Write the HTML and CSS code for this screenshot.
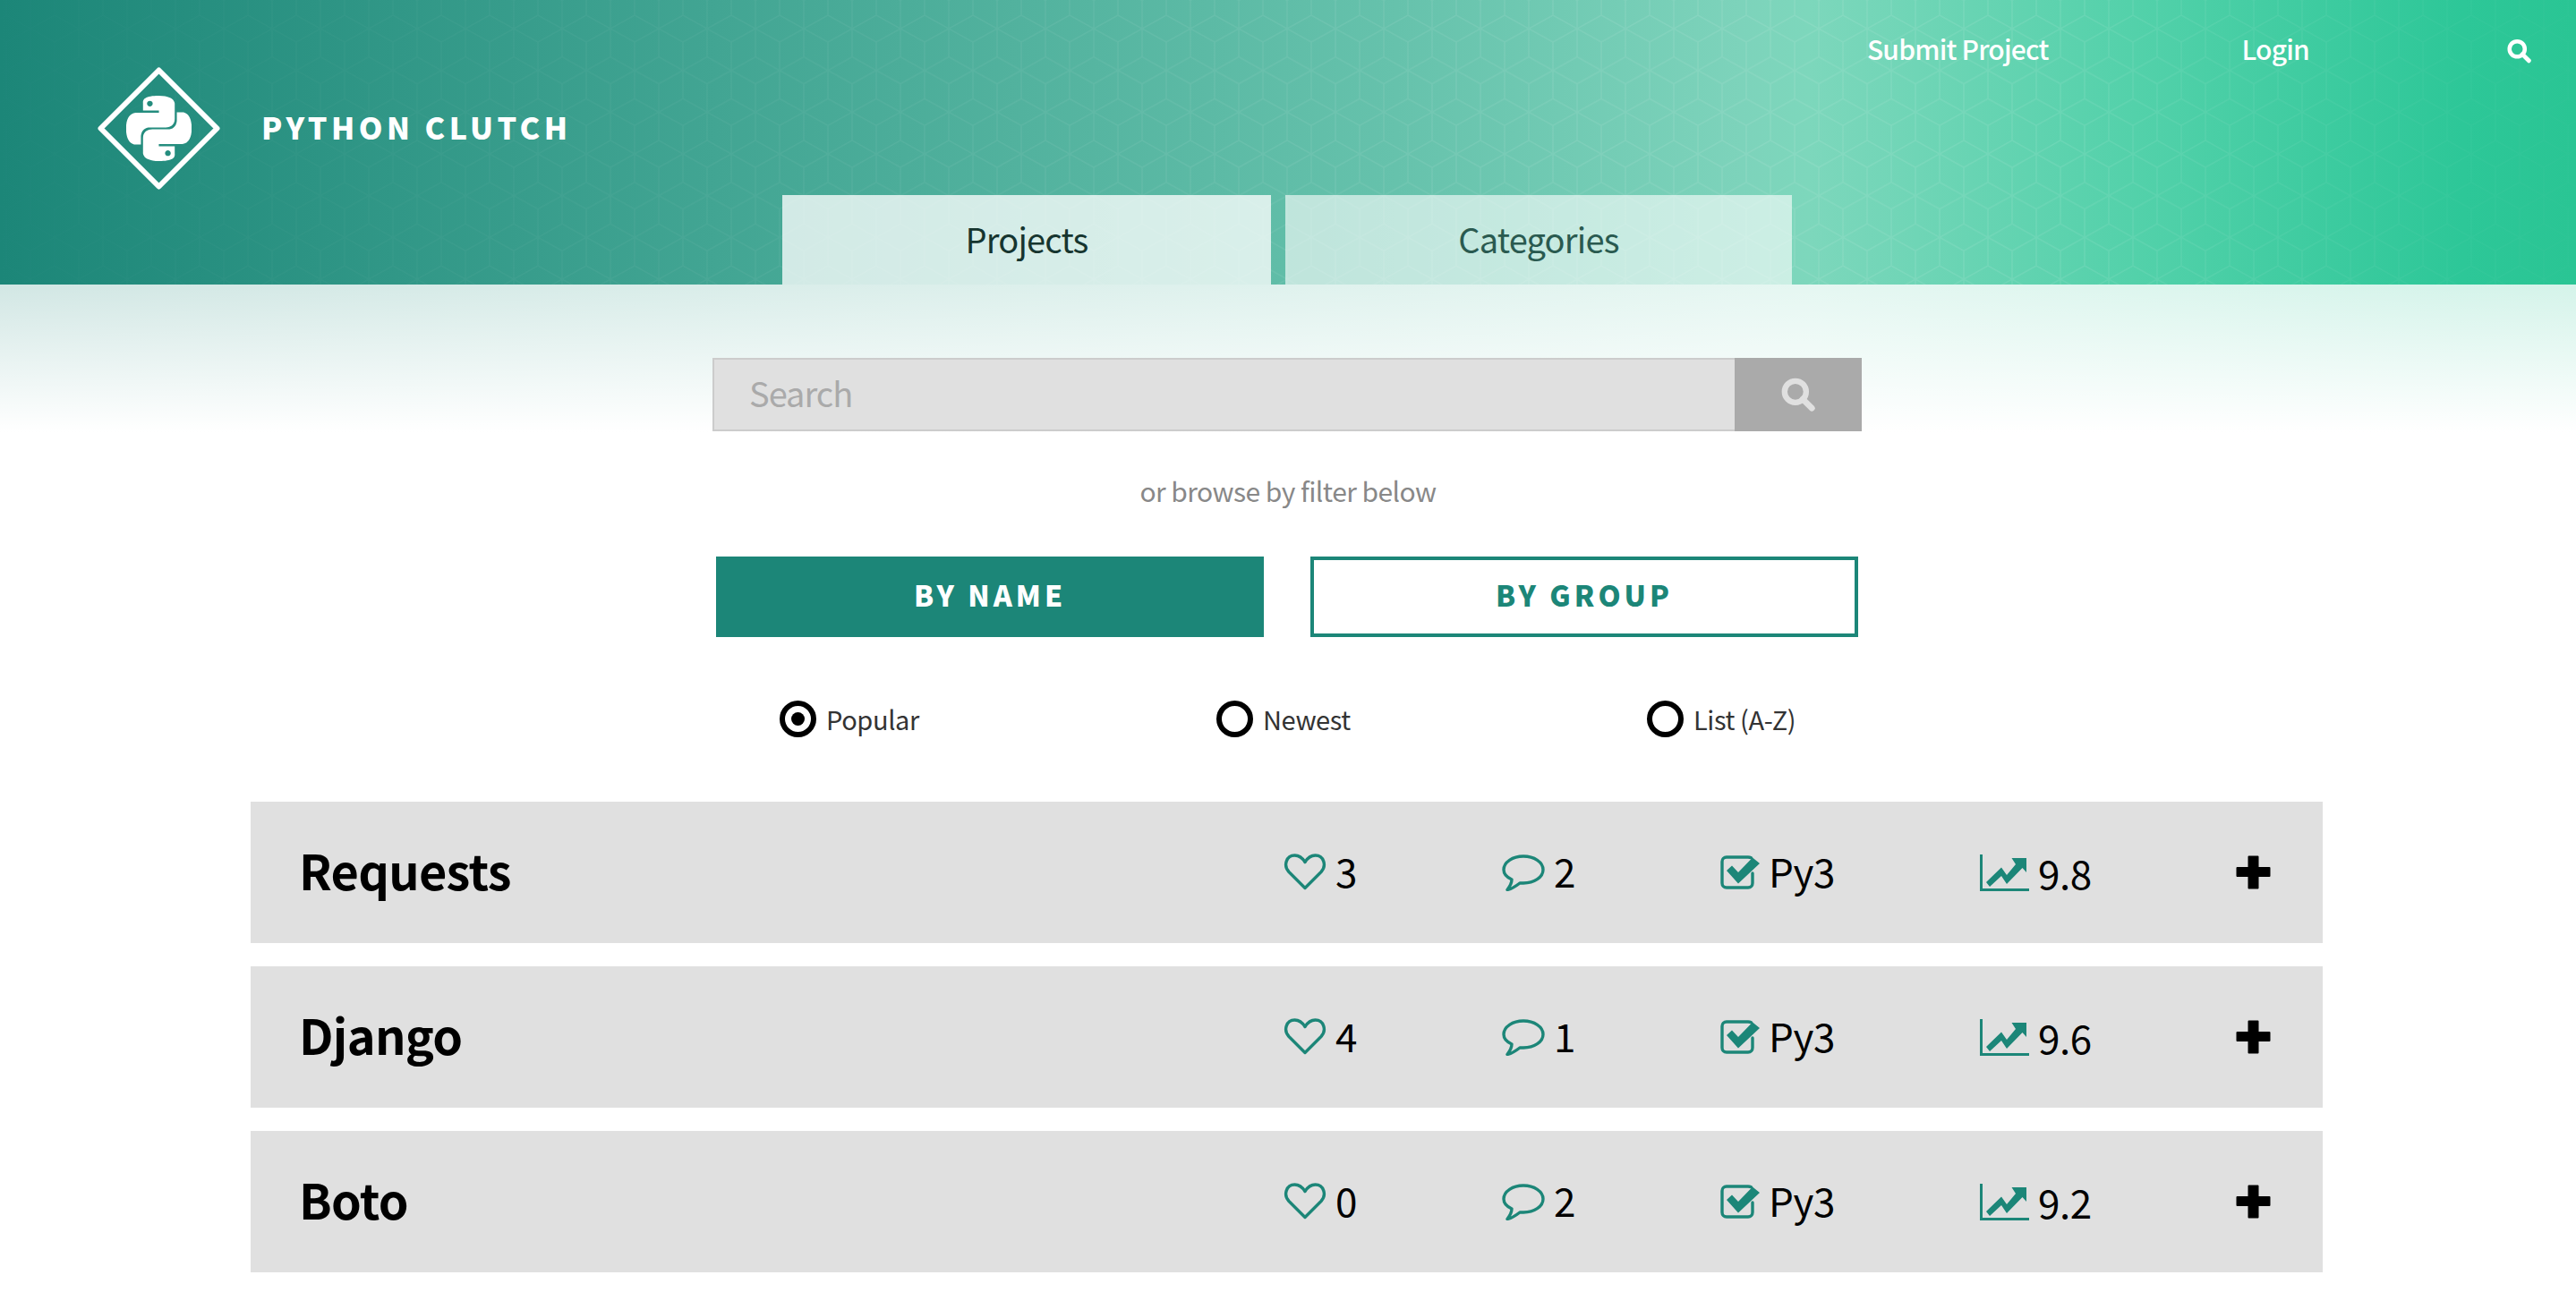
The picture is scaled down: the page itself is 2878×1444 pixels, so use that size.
FILE: index.html
```html
<!DOCTYPE html>
<html lang="en">
  <head>
    <meta charset="UTF-8" />
    <meta name="viewport" content="width=device-width, initial-scale=1.0" />
    <title>Python Clutch</title>
    <link rel="stylesheet" href="styles.css">
  </head>
  <body>
    <svg class="defs" width="0" height="0">
      <symbol id="i-search" viewBox="0 0 30 30">
        <circle cx="12.5" cy="12.5" r="9.5" fill="none" stroke="currentColor" stroke-width="5"/>
        <path d="M19 19l8 8" fill="none" stroke="currentColor" stroke-width="5.4" stroke-linecap="round"/>
      </symbol>
      <symbol id="i-heart" viewBox="0 0 48 42">
        <path d="M24 38.5L6 20.5C-.5 13.5 3 2 12.5 2C17.5 2 21.5 5.5 24 9.5C26.500 5.500 30.500 2 35.500 2C45 2 48.500 13.500 42 20.500Z" fill="none" stroke="currentColor" stroke-width="3.400" stroke-linejoin="round"/>
      </symbol>
      <symbol id="i-comment" viewBox="0 0 48 41">
        <path d="M24 2C12 2 2 8.500 2 17C2 21.500 5.500 25.500 11 28C11 31.500 9 35.500 6 39.500C11 38.500 15.500 35.500 20 32C21.500 32 23 32 24 32C36 32 46 25.500 46 17C46 8.500 36 2 24 2Z" fill="none" stroke="currentColor" stroke-width="3.400" stroke-linejoin="round"/>
      </symbol>
      <symbol id="i-check" viewBox="0 0 44 38">
        <path d="M36 20V31C36 33.800 34 36 31 36H7C4 36 2 33.800 2 31V7C2 4.200 4 2 7 2H31C32.500 2 33.500 2.300 34.500 2.800" fill="none" stroke="currentColor" stroke-width="3.400" stroke-linecap="round"/>
        <path d="M7 17L13 11.500L20 19L36 2.500L44 9L20 31.500Z" fill="currentColor"/>
      </symbol>
      <symbol id="i-chart" viewBox="0 0 55 41">
        <path d="M1.500 0V39.500H55" fill="none" stroke="currentColor" stroke-width="3"/>
        <path d="M7 31L24 14.500L30 23L40 11L35.500 4H52V20L47.500 15L30 33L24 24L11 36Z" fill="currentColor"/>
      </symbol>
      <symbol id="i-plus" viewBox="0 0 39 38">
        <path d="M14.500 1.500H24.500V14H37.500V23H24.500V36.500H14.500V23H1.500V14H14.500Z" fill="currentColor" stroke="currentColor" stroke-width="2" stroke-linejoin="round"/>
      </symbol>
    </svg>

    <header class="header">
      <svg class="hex-bg" width="100%" height="100%">
        <defs>
          <pattern id="hex" width="54" height="93.33" patternUnits="userSpaceOnUse" patternTransform="translate(34 17)">
            <path d="M27 0L0 15L27 30L54 15ZM0 0V46.670M54 0V46.670M27 30V93.330M0 46.670L27 61.670L54 46.670M0 76.670L27 61.670L54 76.670M0 76.670V93.330M54 76.670V93.330" fill="none" stroke="#fff" stroke-opacity=".09" stroke-width="1.500"/>
          </pattern>
        </defs>
        <rect width="100%" height="100%" fill="url(#hex)"/>
      </svg>
      <div class="topbar">
        <a class="brand" href="#">
          <svg class="logo" viewBox="0 0 137 137">
            <path d="M68.500 3.500L133.500 68.500L68.500 133.500L3.500 68.500Z" fill="none" stroke="#fff" stroke-width="6" stroke-linejoin="round"/>
            <svg x="32" y="32" width="73" height="73" viewBox="0 0 24 24">
              <path fill="#fff" d="M14.250.180l.900.200.730.260.590.300.450.320.340.340.250.340.160.330.100.300.040.260.020.200-.010.130V8.500l-.050.630-.130.550-.210.460-.260.380-.300.310-.330.250-.350.190-.350.140-.330.100-.300.070-.260.040-.210.020H8.770l-.690.050-.590.140-.500.220-.410.270-.330.320-.270.350-.200.360-.150.370-.100.350-.070.320-.040.270-.020.210v3.060H3.170l-.210-.030-.280-.070-.320-.120-.350-.180-.360-.260-.360-.360-.350-.460-.320-.590-.280-.730-.210-.880-.140-1.050-.050-1.230.060-1.220.160-1.040.240-.870.320-.710.360-.570.400-.440.420-.330.420-.240.400-.160.360-.100.320-.050.240-.010h.160l.060.010h8.160v-.830H6.180l-.010-2.750-.020-.370.050-.340.110-.310.170-.280.250-.26.310-.23.380-.20.440-.18.510-.15.580-.12.640-.10.710-.06.770-.04.840-.02 1.270.050zm-6.300 1.980l-.23.330-.08.41.08.41.23.34.33.22.41.09.41-.09.33-.22.23-.34.08-.41-.08-.41-.23-.33-.33-.22-.41-.09-.41.09zm13.090 3.950l.280.060.320.120.350.180.360.270.360.350.350.470.320.590.280.730.210.880.140 1.040.050 1.230-.06 1.230-.16 1.040-.24.860-.32.71-.36.57-.40.45-.42.33-.42.24-.40.16-.36.09-.32.05-.24.02-.16-.01h-8.220v.82h5.840l.01 2.760.02.36-.05.34-.11.31-.17.29-.25.25-.31.24-.38.20-.44.17-.51.15-.58.13-.64.09-.71.07-.77.04-.84.01-1.270-.04-1.070-.14-.90-.20-.73-.25-.59-.30-.45-.33-.34-.34-.25-.34-.16-.33-.10-.30-.04-.25-.02-.20.01-.13v-5.340l.05-.64.13-.54.21-.46.26-.38.30-.32.33-.24.35-.20.35-.14.33-.10.30-.06.26-.04.21-.02.13-.01h5.840l.69-.05.59-.14.50-.21.41-.28.33-.32.27-.35.20-.36.15-.36.10-.35.07-.32.04-.28.02-.21V6.070h2.090l.14.010zm-6.470 14.250l-.23.33-.08.41.08.41.23.33.33.23.41.08.41-.08.33-.23.23-.33.08-.41-.08-.41-.23-.33-.33-.23-.41-.08-.41.08z"/>
            </svg>
          </svg>
          <span class="brand-name">PYTHON CLUTCH</span>
        </a>
        <nav class="top-nav">
          <a class="submit-link" href="#">Submit Project</a>
          <a class="login-link" href="#">Login</a>
          <a class="top-search" href="#"><svg class="icon-top"><use href="#i-search"/></svg></a>
        </nav>
      </div>
      <div class="tabs">
        <a class="tab tab-active" href="#">Projects</a>
        <a class="tab tab-other" href="#">Categories</a>
      </div>
    </header>

    <main class="main">
      <form class="search">
        <input class="search-input" type="text" placeholder="Search">
        <button class="search-btn" type="button"><svg class="icon-search"><use href="#i-search"/></svg></button>
      </form>

      <p class="hint">or browse by filter below</p>

      <div class="filter-btns">
        <button class="filter-btn filter-on" type="button">BY NAME</button>
        <button class="filter-btn" type="button">BY GROUP</button>
      </div>

      <div class="sorts">
        <label class="sort"><span class="radio radio-on"></span>Popular</label>
        <label class="sort"><span class="radio"></span>Newest</label>
        <label class="sort"><span class="radio"></span>List (A-Z)</label>
      </div>

      <ul class="projects">
        <li class="project">
          <h2>Requests</h2>
          <div class="stat"><svg class="i-heart"><use href="#i-heart"/></svg>3</div>
          <div class="stat"><svg class="i-comment"><use href="#i-comment"/></svg>2</div>
          <div class="stat"><svg class="i-check"><use href="#i-check"/></svg>Py3</div>
          <div class="stat stat-score"><svg class="i-chart"><use href="#i-chart"/></svg><span>9.8</span></div>
          <svg class="i-plus"><use href="#i-plus"/></svg>
        </li>
        <li class="project">
          <h2>Django</h2>
          <div class="stat"><svg class="i-heart"><use href="#i-heart"/></svg>4</div>
          <div class="stat"><svg class="i-comment"><use href="#i-comment"/></svg>1</div>
          <div class="stat"><svg class="i-check"><use href="#i-check"/></svg>Py3</div>
          <div class="stat stat-score"><svg class="i-chart"><use href="#i-chart"/></svg><span>9.6</span></div>
          <svg class="i-plus"><use href="#i-plus"/></svg>
        </li>
        <li class="project">
          <h2>Boto</h2>
          <div class="stat"><svg class="i-heart"><use href="#i-heart"/></svg>0</div>
          <div class="stat"><svg class="i-comment"><use href="#i-comment"/></svg>2</div>
          <div class="stat"><svg class="i-check"><use href="#i-check"/></svg>Py3</div>
          <div class="stat stat-score"><svg class="i-chart"><use href="#i-chart"/></svg><span>9.2</span></div>
          <svg class="i-plus"><use href="#i-plus"/></svg>
        </li>
      </ul>
    </main>
  </body>
</html>
```

FILE: styles.css
```css
html, body{
  padding: 0;
  margin: 0;
  font-family: "Noto Sans CJK SC", "Noto Sans", sans-serif;
  background-color: white;
  overflow: hidden;
}
a{
  text-decoration: none;
}
.defs{
  display: block;
  height: 0;
}

/* header */
.header{
  height: 318px;
  position: relative;
  display: flex;
  flex-direction: column;
  background: linear-gradient(to right, #1c8678 0, #42a593 800px, #66c2ac 1560px, #7dd3bb 1945px, #7dd7bc 2020px, #53d1aa 2386px, #2dc798 2752px, #2ac594 100%);
}
.hex-bg{
  position: absolute;
  top: 0;
  left: 0;
  -webkit-mask-image: linear-gradient(to right, rgba(0, 0, 0, 0.1), rgba(0, 0, 0, 0.5) 800px, black 1900px, black 2300px, rgba(0, 0, 0, 0.15));
  mask-image: linear-gradient(to right, rgba(0, 0, 0, 0.1), rgba(0, 0, 0, 0.5) 800px, black 1900px, black 2300px, rgba(0, 0, 0, 0.15));
}
.topbar{
  position: relative;
  height: 218px;
  display: flex;
  justify-content: space-between;
  align-items: flex-start;
  padding: 0 50px 0 109px;
}
.brand{
  display: flex;
  align-items: center;
  gap: 46px;
  margin-top: 75px;
}
.logo{
  width: 137px;
  height: 137px;
}
.brand-name{
  color: white;
  font-size: 34px;
  font-weight: 900;
  line-height: 44px;
  letter-spacing: 4.45px;
  margin-bottom: 4px;
}
.top-nav{
  display: flex;
  align-items: center;
  margin-top: 30px;
}
.top-nav a{
  color: white;
  font-size: 30px;
  font-weight: 500;
  letter-spacing: -0.8px;
  line-height: 48px;
}
.login-link{
  margin-left: 216px;
}
.top-search{
  margin-left: 221px;
  display: flex;
}
.icon-top{
  width: 27px;
  height: 28px;
  margin-top: 6px;
}

.tabs{
  position: relative;
  display: flex;
  gap: 16px;
  padding-left: 874px;
}
.tab{
  box-sizing: border-box;
  height: 100px;
  padding-bottom: 3px;
  display: flex;
  justify-content: center;
  align-items: center;
  font-size: 38px;
  letter-spacing: -0.8px;
}
.tab-active{
  width: 546px;
  color: #16352f;
  background-color: rgba(255, 255, 255, 0.76);
}
.tab-other{
  width: 566px;
  color: #2a5a50;
  background-color: rgba(255, 255, 255, 0.6);
}

/* search and filters */
.main{
  padding-top: 82px;
  background:
    linear-gradient(to bottom, rgba(255, 255, 255, 0.8), white) 0 0 / 100% 165px no-repeat,
    linear-gradient(to right, #1c8678 0, #42a593 800px, #66c2ac 1560px, #7dd3bb 1945px, #7dd7bc 2020px, #53d1aa 2386px, #2dc798 2752px, #2ac594 100%) 0 0 / 100% 165px no-repeat;
}
.search{
  display: flex;
  width: 1284px;
  height: 82px;
  margin-left: 796px;
}
.search-input{
  flex: 1;
  min-width: 0;
  box-sizing: border-box;
  padding: 0 0 5px 39px;
  font-family: inherit;
  font-size: 38px;
  letter-spacing: -1px;
  color: #333;
  background-color: #e0e0e0;
  border: 2px solid #ccc;
  border-right: none;
  outline: none;
}
.search-input::placeholder{
  color: #aaa;
  opacity: 1;
}
.search-btn{
  width: 142px;
  padding: 0;
  border: none;
  background-color: #aaa;
  color: #e0e0e0;
  display: flex;
  justify-content: center;
  align-items: center;
}
.icon-search{
  width: 38px;
  height: 38px;
}
.hint{
  margin: 46px 0 0;
  text-align: center;
  color: #888;
  font-size: 30px;
  letter-spacing: -0.55px;
  line-height: 40px;
}
.filter-btns{
  display: flex;
  gap: 52px;
  margin: 54px 0 0 800px;
}
.filter-btn{
  box-sizing: border-box;
  width: 612px;
  height: 90px;
  padding: 0 0 6px;
  font-family: inherit;
  font-size: 32px;
  font-weight: 900;
  letter-spacing: 4px;
  color: #1c8678;
  background-color: white;
  border: 4px solid #1c8678;
}
.filter-on{
  color: white;
  background-color: #1c8678;
}
.sorts{
  display: flex;
  margin: 70px 0 0 871px;
}
.sort{
  display: flex;
  align-items: center;
  gap: 11px;
  font-size: 29px;
  letter-spacing: -0.4px;
  line-height: 42px;
  color: #333;
}
.sort:nth-child(1){
  width: 488px;
}
.sort:nth-child(2){
  width: 481px;
}
.radio{
  box-sizing: border-box;
  width: 41px;
  height: 41px;
  border: 6px solid black;
  border-radius: 50%;
  display: flex;
  justify-content: center;
  align-items: center;
}
.radio-on::after{
  content: "";
  width: 15px;
  height: 15px;
  border-radius: 50%;
  background-color: black;
}

/* project rows */
.projects{
  list-style: none;
  margin: 72px 283px 0 280px;
  padding: 0;
  display: flex;
  flex-direction: column;
  gap: 26px;
}
.project{
  box-sizing: border-box;
  height: 158px;
  padding: 0 58px 0 54px;
  display: grid;
  grid-template-columns: 1fr 244px 244px 290px 286px 39px;
  align-items: center;
  background-color: #e0e0e0;
}
.project h2{
  margin: 0 0 7px;
  font-size: 54px;
  font-weight: 700;
  letter-spacing: -0.7px;
  line-height: 70px;
  color: black;
}
.stat{
  display: flex;
  align-items: center;
  gap: 10px;
  margin-bottom: 4px;
  font-size: 44px;
  letter-spacing: -0.4px;
  line-height: 60px;
  color: black;
}
.stat svg{
  margin-top: 4px;
  color: #1c8678;
}
.stat-score span{
  margin-top: 3px;
}
.i-heart{
  width: 48px;
  height: 42px;
}
.i-comment{
  width: 48px;
  height: 41px;
}
.i-check{
  width: 44px;
  height: 38px;
}
.i-chart{
  width: 55px;
  height: 41px;
}
.i-plus{
  width: 39px;
  height: 38px;
  color: black;
}
```
